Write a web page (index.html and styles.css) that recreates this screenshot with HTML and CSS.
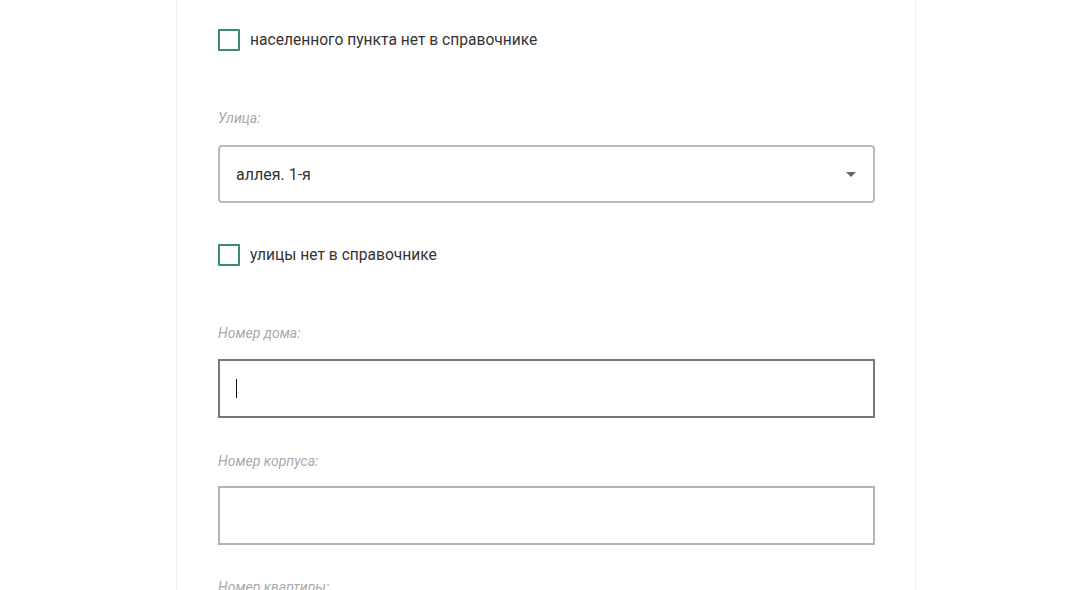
FILE: index.html
```html
<!DOCTYPE html>
<html lang="ru">
<head>
<meta charset="utf-8">
<link rel="stylesheet" href="styles.css">
</head>
<body>
<div class="page">
  <div class="card">
    <label class="check">
      <span class="box"></span>
      <span class="check-text">населенного пункта нет в справочнике</span>
    </label>

    <div class="label label-street">Улица:</div>
    <div class="select">
      <span class="select-value">аллея. 1-я</span>
      <span class="arrow"></span>
    </div>

    <label class="check check-street">
      <span class="box"></span>
      <span class="check-text">улицы нет в справочнике</span>
    </label>

    <div class="label label-house">Номер дома:</div>
    <div class="input focused"><span class="caret"></span></div>

    <div class="label label-corp">Номер корпуса:</div>
    <div class="input"></div>

    <div class="label label-flat">Номер квартиры:</div>
  </div>
</div>
</body>
</html>
```

FILE: styles.css
```css
html, body {
  margin: 0;
  padding: 0;
  background: #ffffff;
  height: 100%;
  overflow: hidden;
}
.page {
  display: flex;
  justify-content: flex-start;
  padding-left: 176px;
  font-family: "Roboto", "Liberation Sans", sans-serif;
  color: #333333;
}
.card {
  width: 740px;
  box-sizing: border-box;
  border-left: 1px solid #f0f0f0;
  border-right: 1px solid #f0f0f0;
  padding: 29px 40px 0 41px;
  min-height: 600px;
}
.check {
  display: flex;
  align-items: center;
  gap: 10px;
  height: 22px;
}
.box {
  width: 22px;
  height: 22px;
  box-sizing: border-box;
  border: 2px solid #3a8a74;
  border-radius: 1px;
  flex: none;
}
.check-text {
  font-size: 15.6px;
  color: #333;
}
.check-street {
  margin-top: 41px;
}
.label {
  font-size: 14px;
  line-height: 16px;
  font-style: italic;
  color: #a9a9a9;
}
.label-street { margin-top: 59px; margin-bottom: 19px; }
.label-house { margin-top: 59px; margin-bottom: 18px; }
.label-corp { margin-top: 35px; margin-bottom: 17px; }
.label-flat { margin-top: 34px; }
.select {
  height: 58px;
  box-sizing: border-box;
  border: 2px solid #b9b9b9;
  border-radius: 4px;
  display: flex;
  align-items: center;
  justify-content: space-between;
  padding: 0 17px 0 16px;
}
.select-value {
  font-size: 16px;
  color: #333;
}
.arrow {
  width: 0;
  height: 0;
  border-left: 5px solid transparent;
  border-right: 5px solid transparent;
  border-top: 5px solid #666;
}
.input {
  height: 59px;
  box-sizing: border-box;
  border: 2px solid #b4b4b4;
  display: flex;
  align-items: center;
  padding-left: 16px;
}
.input.focused {
  border-color: #777777;
}
.caret {
  width: 1px;
  height: 19px;
  background: #111;
}
```
